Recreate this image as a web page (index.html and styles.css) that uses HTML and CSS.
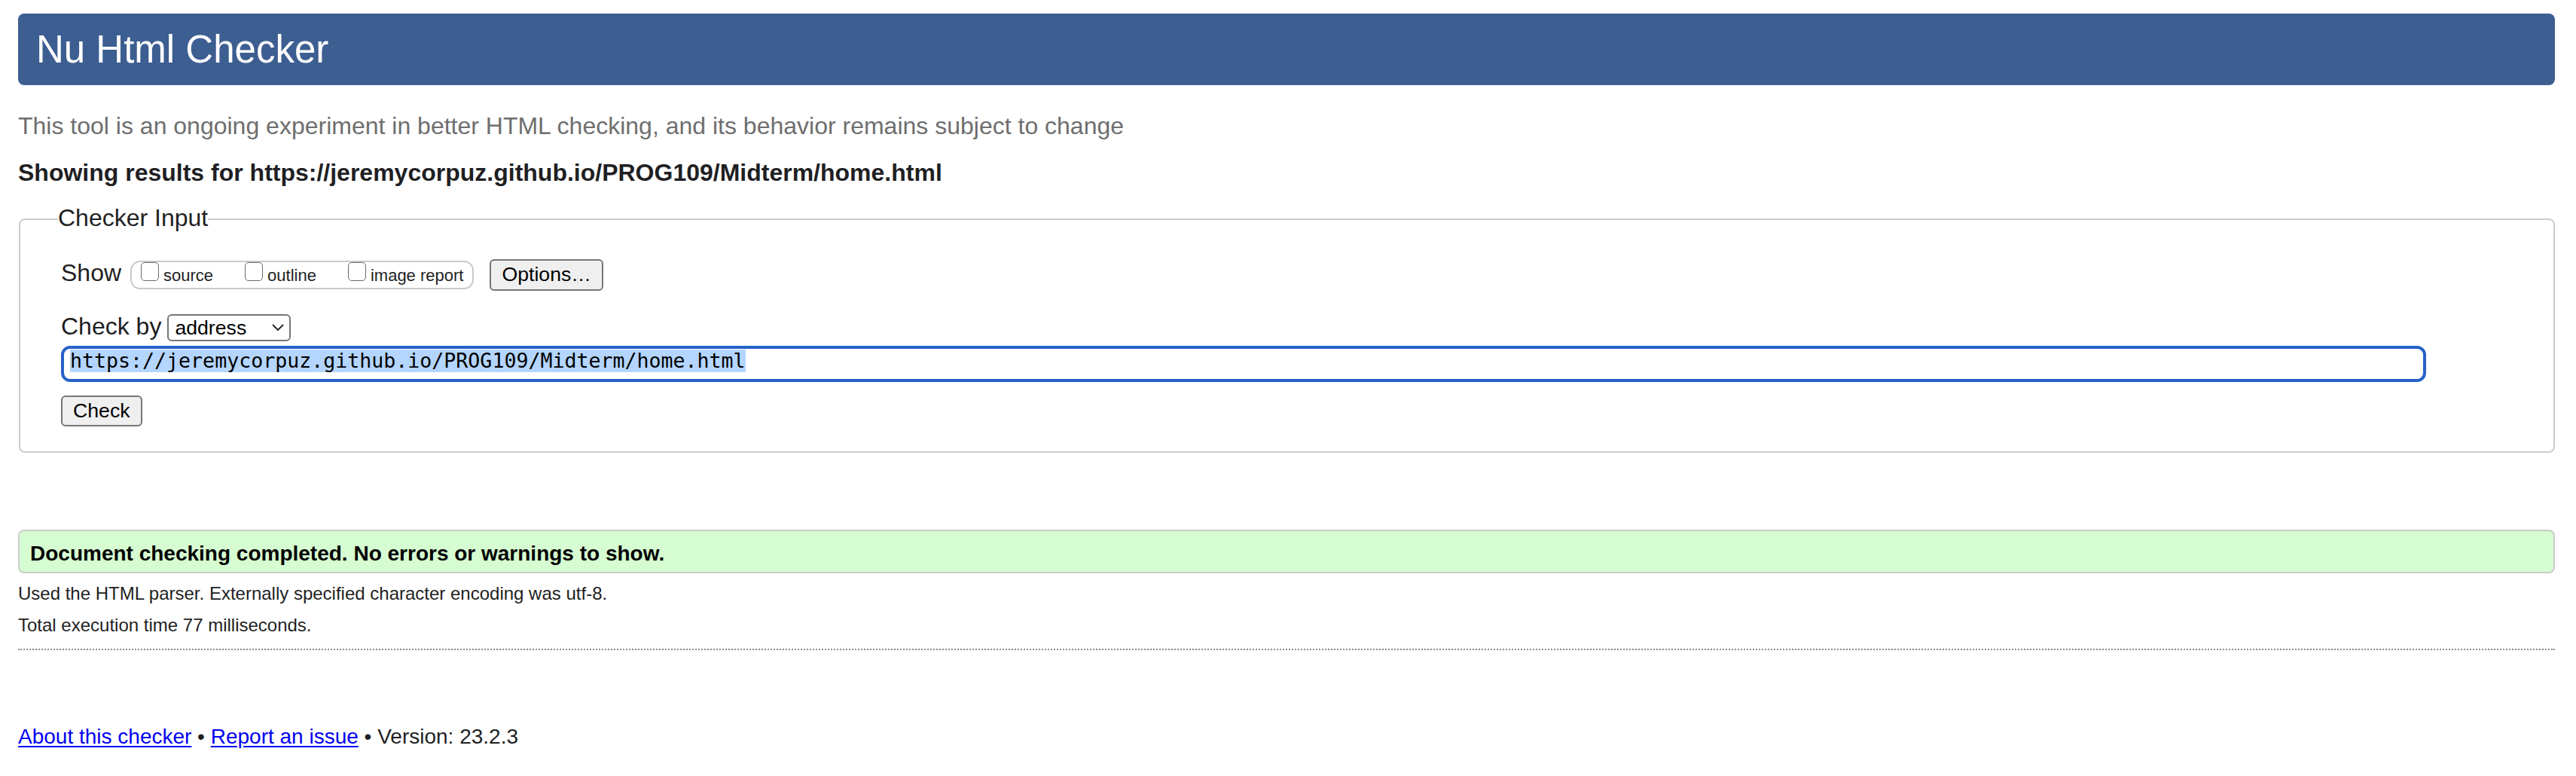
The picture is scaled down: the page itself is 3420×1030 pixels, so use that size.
FILE: index.html
```html
<!DOCTYPE html>
<html lang="en">
<head>
<meta charset="utf-8">
<title>Showing results for https://jeremycorpuz.github.io/PROG109/Midterm/home.html - Nu Html Checker</title>
<link rel="stylesheet" href="styles.css">
</head>
<body>
<div class="page">
  <h1 class="banner">Nu Html Checker</h1>
  <p class="lede">This tool is an ongoing experiment in better HTML checking, and its behavior remains subject to change</p>
  <h2 class="results">Showing results for https://jeremycorpuz.github.io/PROG109/Midterm/home.html</h2>

  <fieldset class="input-box">
    <legend class="input-legend">Checker Input</legend>
    <div class="row row-show">
      <span class="row-label">Show</span>
      <div class="opts">
        <label class="opt"><span class="cb"></span>source</label><label class="opt"><span class="cb"></span>outline</label><label class="opt"><span class="cb"></span>image report</label>
      </div>
      <button class="btn btn-options" type="button">Options…</button>
    </div>
    <div class="row row-by">
      <span class="row-label">Check by</span>
      <div class="select">
        <span class="select-text">address</span>
        <svg class="chev" width="16" height="10" viewBox="0 0 16 10"><polyline points="1.5,1.5 8,8 14.5,1.5" fill="none" stroke="#222" stroke-width="1.8" stroke-linecap="round" stroke-linejoin="round"/></svg>
      </div>
    </div>
    <div class="url"><span class="url-sel">https://jeremycorpuz.github.io/PROG109/Midterm/home.html</span></div>
    <button class="btn btn-check" type="button">Check</button>
  </fieldset>

  <div class="success">Document checking completed. No errors or warnings to show.</div>
  <p class="details">Used the HTML parser. Externally specified character encoding was utf-8.</p>
  <p class="details">Total execution time 77 milliseconds.</p>
  <div class="rule"></div>
  <p class="footer"><a href="#">About this checker</a> • <a href="#">Report an issue</a> • Version: 23.2.3</p>
</div>
</body>
</html>
```

FILE: styles.css
```css
html, body {
  margin: 0;
  padding: 0;
  background: #ffffff;
}

.page {
  padding: 18px 28px 0 24px;
  font-family: "Liberation Sans", Arial, Helvetica, sans-serif;
  color: #222;
}

.banner {
  margin: 0;
  height: 95px;
  line-height: 95px;
  padding-left: 24px;
  font-size: 51px;
  font-weight: normal;
  color: #ffffff;
  background: #3d5e91;
  border-radius: 8px;
}

.lede {
  margin: 34px 0 0;
  font-size: 32px;
  line-height: 40px;
  color: #6e6e6e;
}

.results {
  margin: 22px 0 0;
  font-size: 32px;
  line-height: 40px;
  font-weight: bold;
  color: #1f1f23;
}

.input-box {
  margin: 22px 0 0 1px;
  padding: 31px 54px 33px 54px;
  border: 2px solid #cccccc;
  border-radius: 8px;
  min-width: 0;
}

.input-legend {
  margin-left: -4px;
  padding: 0 0 4px 0;
  font-size: 32px;
  line-height: 36px;
  color: #1f1f23;
}

.row {
  display: flex;
  align-items: baseline;
}

.row-label {
  font-size: 32px;
  line-height: 40px;
  color: #1f1f23;
}

.row-show .row-label {
  margin-right: 12px;
}

.opts {
  border: 2px solid #c9c9c9;
  border-radius: 13px;
  padding: 0 12px 5px 12px;
  font-size: 22px;
  line-height: 22px;
  color: #1f1f23;
}

.opt + .opt {
  margin-left: 42px;
}

.cb {
  display: inline-block;
  width: 24px;
  height: 25px;
  box-sizing: border-box;
  border: 1.5px solid #6b6b6b;
  border-radius: 5px;
  background: #fff;
  margin-right: 6px;
  vertical-align: baseline;
}

.btn {
  box-sizing: border-box;
  font-family: "Liberation Sans", Arial, Helvetica, sans-serif;
  font-size: 26.67px;
  color: #000;
  background: #efefef;
  border: 2px solid #767676;
  border-radius: 6px;
  padding: 0 14px;
  line-height: 37px;
}

.btn-options {
  height: 42px;
  margin-left: 21px;
}

.row-by {
  margin-top: 27px;
}

.row-by .row-label {
  margin-right: 8px;
}

.select {
  box-sizing: border-box;
  width: 164px;
  height: 36px;
  display: flex;
  align-items: center;
  justify-content: space-between;
  border: 2px solid #767676;
  border-radius: 6px;
  padding: 0 7px 0 8px;
  font-size: 26.67px;
  line-height: 32px;
  color: #000;
}

.chev {
  display: block;
}

.url {
  box-sizing: border-box;
  margin-top: 6px;
  width: 3140px;
  height: 48px;
  border: 4px solid #2662c8;
  border-radius: 12px;
  padding: 1px 8px 0 8px;
  font-family: "DejaVu Sans Mono", "Liberation Mono", monospace;
  font-size: 26.6px;
  line-height: 30px;
  color: #000;
}

.url-sel {
  display: inline-block;
  background: #b4d5fe;
  line-height: 30px;
}

.btn-check {
  display: block;
  margin-top: 18px;
  height: 41px;
  line-height: 36px;
}

.success {
  margin-top: 102px;
  height: 58px;
  box-sizing: border-box;
  border: 2px solid #cccccc;
  border-radius: 8px;
  background: #d6fcd1;
  padding: 6px 14px 0 14px;
  font-size: 28px;
  line-height: 48px;
  font-weight: bold;
  color: #000;
}

.details {
  margin: 0;
  font-size: 24px;
  line-height: 42px;
  color: #1f1f23;
}

.success + .details {
  margin-top: 6px;
}

.rule {
  margin-top: 10px;
  border-top: 2px dotted #8a8a8a;
}

.footer {
  margin: 95px 0 0;
  font-size: 28px;
  line-height: 40px;
  color: #1f1f23;
}

.footer a {
  color: #0000ee;
  text-decoration: underline;
  text-underline-offset: 3px;
}
```
